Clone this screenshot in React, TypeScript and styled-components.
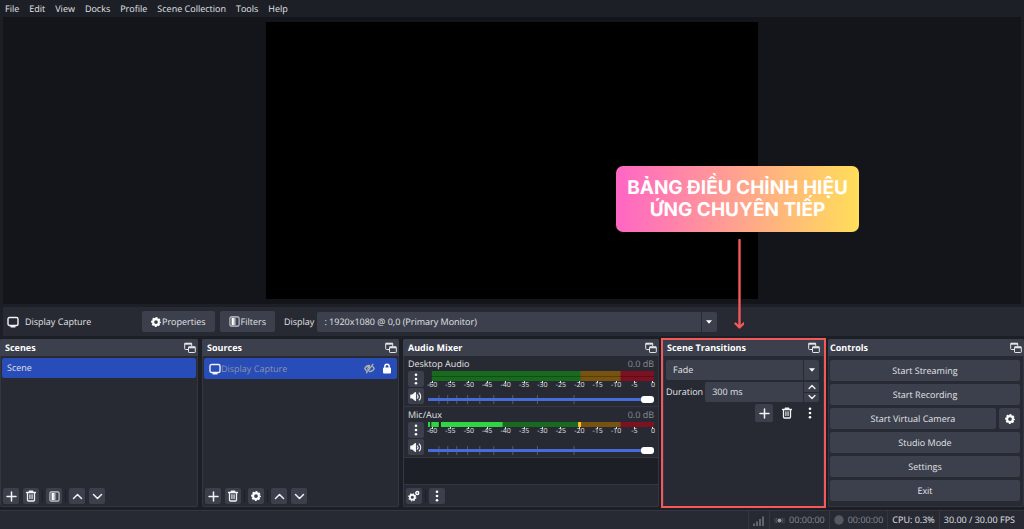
import React from "react";
import styled, { createGlobalStyle, css } from "styled-components";

const c = {
  window: "#1d1f26",
  panel: "#272a33",
  control: "#3c404d",
  stage: "#14151a",
  edge: "#343741",
  text: "#e2e3e7",
  dim: "#888b93",
  blue: "#284cb8",
  red: "#f5585b",
};

const GlobalStyle = createGlobalStyle`
  *, *::before, *::after { box-sizing: border-box; }
  body { margin: 0; background: ${c.window}; }
  body, button, input, select {
    font-family: "Open Sans", "Noto Sans", sans-serif;
    font-size: 9px;
    line-height: 12px;
    color: ${c.text};
    text-rendering: geometricPrecision;
  }
  button, input, select { margin: 0; padding: 0; border: 0; outline: 0; }
  svg { display: block; flex: none; }
`;

const Window = styled.div`
  display: flex;
  flex-direction: column;
  min-height: 100vh;
  overflow: hidden;
`;

const MenuBar = styled.nav`
  display: flex;
  gap: 10px;
  height: 17px;
  padding: 0 5px;
  align-items: center;
`;

const MenuItem = styled.button`
  background: none;
  white-space: nowrap;
`;

const Preview = styled.main`
  flex: 1 1 0;
  display: flex;
  justify-content: center;
  min-height: 200px;
  margin: 0 3px;
  padding: 5px;
  background: ${c.stage};
`;

const Canvas = styled.div`
  aspect-ratio: 16 / 9;
  background: #000;
`;

const ContextBar = styled.section`
  display: flex;
  align-items: center;
  gap: 5px;
  height: 29px;
  margin: 3px 0 3px 3px;
  padding-left: 4px;
  background: ${c.panel};
`;

const SourceName = styled.div`
  display: flex;
  align-items: center;
  gap: 6px;
  width: 130px;
`;

const Button = styled.button`
  display: flex;
  align-items: center;
  justify-content: center;
  height: 21px;
  border-radius: 2px;
  background: ${c.control};
  white-space: nowrap;
`;

const ContextButton = styled(Button)`
  padding: 0 9px;
  gap: 1px;
`;

const FieldLabel = styled.label`
  white-space: nowrap;
`;

const ContextField = styled.div`
  display: flex;
  flex: 1;
  align-items: center;
  gap: 3px;
  padding-left: 4px;
`;

const SelectBox = styled.div<{ $share?: number }>`
  display: grid;
  grid-template-columns: 1fr 16px;
  align-items: center;
  height: 20px;
  border-radius: 2px;
  background: ${c.control};
  ${(p) => p.$share && css`width: ${p.$share}%;`}
`;

const Select = styled.select`
  grid-area: 1 / 1 / 2 / 3;
  appearance: none;
  width: 100%;
  height: 20px;
  padding: 0 7px;
  background: transparent;
`;

const SelectArrow = styled.span`
  grid-area: 1 / 2;
  display: flex;
  align-items: center;
  justify-content: center;
  height: 20px;
  border-left: 1px solid ${c.panel};
  pointer-events: none;
`;

const Docks = styled.div`
  display: grid;
  grid-template-columns:
    minmax(0, 198fr) minmax(0, 197fr) minmax(0, 256fr)
    minmax(0, 161fr) minmax(0, 196fr);
  gap: 4px;
  min-height: 168px;
`;

const Dock = styled.section`
  position: relative;
  display: flex;
  flex-direction: column;
  border-radius: 2px;
  background: ${c.panel};
  box-shadow: inset 0 0 0 1px ${c.edge};
`;

const DockHeader = styled.header<{ $left: number; $right: number }>`
  display: flex;
  align-items: center;
  justify-content: space-between;
  height: 17px;
  padding: 0 ${(p) => p.$right}px 0 ${(p) => p.$left}px;
  border-radius: 2px 2px 0 0;
  background: ${c.control};
`;

const DockTitle = styled.h2`
  margin: 0;
  font-size: 9px;
  line-height: 12px;
  font-weight: 700;
  color: #fff;
`;

const IconButton = styled.button<{ $flat?: boolean; $size?: number }>`
  display: flex;
  align-items: center;
  justify-content: center;
  width: ${(p) => p.$size ?? 16}px;
  height: ${(p) => p.$size ?? 16}px;
  border-radius: 2px;
  background: ${(p) => (p.$flat ? "none" : c.control)};
`;

const DockList = styled.ul`
  flex: 1;
  margin: 0;
  padding: 2px;
  list-style: none;
`;

const ListItem = styled.li<{ $tall?: boolean }>`
  display: flex;
  align-items: center;
  height: ${(p) => (p.$tall ? 21 : 20)}px;
  padding: 0 5px;
  border-radius: 2px;
  background: ${c.blue};
`;

const HiddenSource = styled.span`
  flex: 1;
  color: #8c93a8;
`;

const RowIcons = styled.span`
  display: flex;
  align-items: center;
  gap: 7px;
`;

const Toolbar = styled.div`
  display: flex;
  align-items: center;
  gap: 4px;
  height: 22px;
  padding: 0 3px;
`;

const Divider = styled.span`
  width: 1px;
  height: 12px;
  margin: 0 -1px;
  background: ${c.window};
`;

const Channel = styled.div`
  display: grid;
  grid-template: 14px 1fr / 16px minmax(0, 1fr);
  column-gap: 4px;
  height: 51px;
  padding: 1px 5px 4px;
  border-bottom: 1px solid ${c.edge};
`;

const ChannelHead = styled.div`
  grid-column: 1 / 3;
  display: flex;
  justify-content: space-between;
  line-height: 14px;
`;

const Level = styled.span`
  color: ${c.dim};
`;

const ChannelButtons = styled.div`
  display: flex;
  flex-direction: column;
  gap: 1px;
`;

const ChannelBody = styled.div`
  display: flex;
  flex-direction: column;
  justify-content: space-between;
`;

const MeterScale = styled.div`
  display: flex;
  justify-content: space-between;
  margin: 0 1px 0 4px;
  font-size: 7px;
  line-height: 7px;
`;

const ScaleMark = styled.span`
  display: flex;
  flex-direction: column;
  align-items: center;
  width: 0;
  white-space: nowrap;
  &::before {
    content: "";
    flex: none;
    width: 1px;
    height: 2px;
    margin-bottom: -1px;
    background: ${c.text};
  }
`;

const Fader = styled.div`
  display: grid;
  align-items: center;
  height: 9px;
  > * { grid-area: 1 / 1; }
`;

const Slider = styled.input`
  appearance: none;
  width: 100%;
  height: 9px;
  background: linear-gradient(#476bd7, #476bd7) center / 100% 3px no-repeat;
  &::-webkit-slider-thumb {
    appearance: none;
    width: 13px;
    height: 7px;
    border-radius: 3px;
    background: #fff;
  }
`;

const MixerSpace = styled.div`
  flex: 1;
  margin: 0 1px;
  background: ${c.window};
  border-bottom: 1px solid ${c.edge};
`;

const TransitionBody = styled.div`
  display: flex;
  flex-direction: column;
  gap: 2px;
  padding: 4px 5px 0 3px;
`;

const DurationRow = styled.div`
  display: flex;
  align-items: center;
  gap: 2px;
`;

const SpinBox = styled.div`
  display: flex;
  flex: 1;
  min-width: 0;
  height: 20px;
  border-radius: 2px;
  background: ${c.control};
`;

const SpinInput = styled.input`
  flex: 1;
  min-width: 0;
  padding: 0 7px;
  background: none;
`;

const SpinButtons = styled.div`
  display: flex;
  flex-direction: column;
  width: 16px;
  border-left: 1px solid ${c.panel};
`;

const SpinButton = styled.button`
  display: flex;
  flex: 1;
  align-items: center;
  justify-content: center;
  background: none;
  & + & { border-top: 1px solid ${c.panel}; }
`;

const TransitionActions = styled.div`
  display: flex;
  justify-content: flex-end;
  gap: 5px;
`;

const ControlsBody = styled.div`
  display: grid;
  gap: 3px;
  padding: 4px 4px 0 2px;
`;

const ControlsRow = styled.div`
  display: grid;
  grid-template-columns: 1fr 21px;
  gap: 3px;
`;

const Highlight = styled.div`
  position: absolute;
  inset: -1px -2px;
  border: 2px solid ${c.red};
  pointer-events: none;
`;

const Annotation = styled.div`
  position: absolute;
  left: -47px;
  bottom: calc(100% + 9px);
  display: flex;
  flex-direction: column;
  align-items: center;
  gap: 7px;
  width: 243px;
`;

const Callout = styled.p`
  width: 100%;
  margin: 0;
  padding: 11px 0;
  border-radius: 7px;
  background: linear-gradient(90deg, #ff66c4, #ffde59);
  color: #fff;
  font-family: Inter, "Open Sans", sans-serif;
  font-size: 19px;
  line-height: 22px;
  font-weight: 700;
  text-align: center;
  white-space: nowrap;
`;

const StatusBar = styled.footer`
  display: flex;
  justify-content: flex-end;
  height: 19px;
  margin-top: 3px;
  border-top: 1px solid ${c.edge};
  background: ${c.panel};
`;

const StatusItem = styled.div<{ $dim?: boolean }>`
  display: flex;
  align-items: center;
  gap: 4px;
  padding: 0 4px;
  border-left: 1px solid ${c.edge};
  color: ${(p) => (p.$dim ? c.dim : c.text)};
  white-space: nowrap;
  &:last-child { padding-right: 9px; }
`;

const stroke = { fill: "none", stroke: "#f2f2f4", strokeLinecap: "round", strokeLinejoin: "round" } as const;

const MonitorIcon = () => (
  <svg width="12" height="12" viewBox="0 0 12 12" {...stroke} strokeWidth="1.4">
    <rect x="1" y="1.5" width="10" height="8" rx="1.5" />
    <path d="M4 10.7h4" />
  </svg>
);

const GearIcon = () => (
  <svg width="10" height="10" viewBox="0 0 12 12" fill="none" stroke="#fff">
    <circle cx="6" cy="6" r="3.5" strokeWidth="2.5" />
    <circle cx="6" cy="6" r="5" strokeWidth="1.8" strokeDasharray="2.4 1.527" strokeDashoffset="1.2" />
  </svg>
);

const FilterIcon = () => (
  <svg width="11" height="11" viewBox="0 0 12 12">
    <defs>
      <linearGradient id="fade">
        <stop offset="0.3" stopColor="#fff" />
        <stop offset="1" stopColor="#fff" stopOpacity="0.1" />
      </linearGradient>
    </defs>
    <rect x="1" y="1" width="10" height="10" rx="1.5" fill="none" stroke="#c9cbd0" strokeWidth="1.2" />
    <rect x="2.8" y="2" width="5.4" height="8" fill="url(#fade)" />
  </svg>
);

const FloatIcon = () => (
  <svg width="12" height="12" viewBox="0 0 12 12" fill="none" stroke="#e4e5e8">
    <path d="M4 7.5H1.5a.8.8 0 0 1-.8-.8V1.5h7v2.5" />
    <path d="M.7 1.7h7" strokeWidth="2" />
    <rect x="4.5" y="5" width="6.8" height="5.5" rx=".6" />
    <path d="M4.500 5.300h6.800" strokeWidth="2" />
  </svg>
);

const PlusIcon = () => (
  <svg width="11" height="11" viewBox="0 0 11 11" {...stroke} strokeWidth="1.5">
    <path d="M5.500 1v9M1 5.500h9" />
  </svg>
);

const TrashIcon = () => (
  <svg width="12" height="12" viewBox="0 0 12 12" {...stroke} strokeWidth="1.3">
    <path d="M1.500 2.500h9M4.300 2.300V1.200h3.400v1.100M2.500 2.800V10a1 1 0 0 0 1 1h5a1 1 0 0 0 1-1V2.800" />
    <path d="M4.700 4.700v4M6 4.700v4M7.300 4.700v4" strokeWidth=".8" />
  </svg>
);

const ChevronIcon = ({ down, size = 11 }: { down?: boolean; size?: number }) => (
  <svg width={size} height={size} viewBox="0 0 11 11" {...stroke} strokeWidth={size < 11 ? 1.9 : 1.5}>
    <path d={down ? "M1.500 3.500l4 4 4-4" : "M1.500 7.500l4-4 4 4"} />
  </svg>
);

const DotsIcon = () => (
  <svg width="4" height="12" viewBox="0 0 4 12" fill="#fff">
    <circle cx="2" cy="1.8" r="1.3" />
    <circle cx="2" cy="6" r="1.3" />
    <circle cx="2" cy="10.2" r="1.3" />
  </svg>
);

const CaretIcon = () => (
  <svg width="6" height="4" viewBox="0 0 6 4" fill="#fff">
    <path d="M0 .3h6L3 3.700z" />
  </svg>
);

const SpeakerIcon = () => (
  <svg width="12" height="11" viewBox="0 0 12 11" {...stroke} strokeWidth="1.1">
    <path d="M.8 4v3h1.700L5.500 9.500v-8L2.500 4z" fill="#fff" />
    <path d="M7.300 3.800c.9 1 .9 2.400 0 3.400M9.200 2c2 2 2 5 0 7" />
  </svg>
);

const CogsIcon = () => (
  <svg width="12" height="12" viewBox="0 0 12 12" fill="none" stroke="#fff">
    <circle cx="4.3" cy="7.3" r="2.4" strokeWidth="1.7" />
    <circle cx="4.3" cy="7.3" r="3.5" strokeWidth="1.2" strokeDasharray="1.450 1.300" />
    <circle cx="9.3" cy="3" r="1.5" strokeWidth="1.4" />
  </svg>
);

const HiddenIcon = () => (
  <svg width="11" height="11" viewBox="0 0 11 11" fill="none" stroke="#b4b4ac" strokeWidth="1.3" strokeLinecap="round">
    <path d="M5.500 2.500C3 2.400 1.500 4 .8 5.500c.4 1 1 1.700 1.800 2.200M5.500 8.500C8 8.600 9.500 7 10.200 5.500c-.4-.9-.9-1.500-1.600-2M2.500 9.800l6.500-8.600M4 6.500c-.6-1.300.2-2.500 1.500-2.500" />
  </svg>
);

const LockIcon = () => (
  <svg width="10" height="11" viewBox="0 0 10 11">
    <path d="M2.800 5V3.400a2.200 2.200 0 0 1 4.400 0V5" fill="none" stroke="#fff" strokeWidth="1.4" />
    <rect x="1" y="4.6" width="8" height="5.8" rx="1" fill="#fff" />
  </svg>
);

const SignalIcon = () => (
  <svg width="12" height="11" viewBox="0 0 12 11" fill="#60636c">
    <path d="M0 8.500h2V11H0zM3 6.500h2V11H3zM6 4h2v7H6zM9 1.500h2V11H9z" />
  </svg>
);

const StreamIcon = () => (
  <svg width="11" height="11" viewBox="0 0 11 11" fill="none" stroke="#5c5f68">
    <circle cx="5.5" cy="5.5" r="2" fill="#9a9ca2" stroke="none" />
    <path d="M3 3c-1.300 1.500-1.300 3.500 0 5M8 3c1.300 1.500 1.300 3.500 0 5" />
    <path d="M1.200 2.500c-1 2-1 4 0 6M9.800 2.500c1 2 1 4 0 6" strokeOpacity=".4" />
  </svg>
);

const RecordIcon = () => (
  <svg width="10" height="10" viewBox="0 0 10 10">
    <circle cx="5" cy="5" r="4.7" fill="#555861" />
  </svg>
);

const ArrowDrawing = () => (
  <svg width="12" height="91" viewBox="0 0 12 91" fill="none" stroke={c.red} strokeWidth="2.4" strokeLinecap="round" strokeLinejoin="round">
    <path d="M7.500 1v87M3.500 84.500l4 4 4-4" />
  </svg>
);

const Meter = ({ active }: { active?: boolean }) => (
  <svg width="100%" height={active ? 5 : 10}>
    <rect x={active ? "0%" : "1.7%"} width="68%" height="10" fill="#176a1e" />
    <rect x="67.4%" width="18%" height="10" fill="#77530f" />
    <rect x="85.2%" width="14.8%" height="10" fill="#7d1122" />
    {active ? (
      <>
        <rect width="33%" height="5" fill="#30d544" />
        <rect x="1%" width="1" height="5" fill="#111" />
        <rect x="4.8%" width="2" height="5" fill="#111" />
        <rect x="66.4%" width="3" height="5" fill="#ffbf1f" />
      </>
    ) : (
      <rect x="1.7%" y="5" width="98.3%" height="1" fill="#000" fillOpacity=".25" />
    )}
  </svg>
);

const scale = [-60, -55, -50, -45, -40, -35, -30, -25, -20, -15, -10, -5, 0];
const faderTicks = [4.6, 8.5, 12.5, 17.3, 22.7, 28.9, 37.3, 48.2, 64.4];

const MixerChannel = ({ name, active }: { name: string; active?: boolean }) => (
  <Channel>
    <ChannelHead>
      <label htmlFor={name}>{name}</label>
      <Level>0.0 dB</Level>
    </ChannelHead>
    <ChannelButtons>
      <IconButton aria-label={`${name} options`}><DotsIcon /></IconButton>
      <IconButton aria-label={`Mute ${name}`}><SpeakerIcon /></IconButton>
    </ChannelButtons>
    <ChannelBody>
      <div>
        <Meter active={active} />
        <MeterScale>
          {scale.map((v) => <ScaleMark key={v}>{v}</ScaleMark>)}
        </MeterScale>
      </div>
      <Fader>
        <svg width="100%" height="9">
          {faderTicks.map((x) => <rect key={x} x={`${x}%`} width="1" height="9" fill="#555a68" />)}
        </svg>
        <Slider id={name} type="range" min="0" max="100" defaultValue="100" />
      </Fader>
    </ChannelBody>
  </Channel>
);

const Header = ({ title, left = 5, right = 2 }: { title: string; left?: number; right?: number }) => (
  <DockHeader $left={left} $right={right}>
    <DockTitle>{title}</DockTitle>
    <IconButton $flat $size={12} aria-label={`Float ${title}`}><FloatIcon /></IconButton>
  </DockHeader>
);

const ListToolbar = ({ label, icon }: { label: string; icon: React.ReactNode }) => (
  <Toolbar>
    <IconButton aria-label="Add"><PlusIcon /></IconButton>
    <IconButton aria-label="Remove"><TrashIcon /></IconButton>
    <Divider />
    <IconButton aria-label={label}>{icon}</IconButton>
    <Divider />
    <IconButton aria-label="Move up"><ChevronIcon /></IconButton>
    <IconButton aria-label="Move down"><ChevronIcon down /></IconButton>
  </Toolbar>
);

const menus = ["File", "Edit", "View", "Docks", "Profile", "Scene Collection", "Tools", "Help"];

export default function App() {
  return (
    <Window>
      <GlobalStyle />
      <MenuBar>
        {menus.map((m) => <MenuItem key={m}>{m}</MenuItem>)}
      </MenuBar>
      <Preview><Canvas /></Preview>

      <ContextBar>
        <SourceName><MonitorIcon />Display Capture</SourceName>
        <ContextButton><GearIcon />Properties</ContextButton>
        <ContextButton><FilterIcon />Filters</ContextButton>
        <ContextField>
          <FieldLabel htmlFor="display">Display</FieldLabel>
          <SelectBox $share={54}>
            <Select id="display"><option>: 1920x1080 @ 0,0 (Primary Monitor)</option></Select>
            <SelectArrow><CaretIcon /></SelectArrow>
          </SelectBox>
        </ContextField>
      </ContextBar>

      <Docks>
        <Dock>
          <Header title="Scenes" />
          <DockList><ListItem>Scene</ListItem></DockList>
          <ListToolbar label="Scene filters" icon={<FilterIcon />} />
        </Dock>

        <Dock>
          <Header title="Sources" />
          <DockList>
            <ListItem $tall>
              <MonitorIcon />
              <HiddenSource>Display Capture</HiddenSource>
              <RowIcons><HiddenIcon /><LockIcon /></RowIcons>
            </ListItem>
          </DockList>
          <ListToolbar label="Source properties" icon={<GearIcon />} />
        </Dock>

        <Dock>
          <Header title="Audio Mixer" />
          <MixerChannel name="Desktop Audio" />
          <MixerChannel name="Mic/Aux" active />
          <MixerSpace />
          <Toolbar>
            <IconButton aria-label="Advanced audio properties"><CogsIcon /></IconButton>
            <Divider />
            <IconButton aria-label="Mixer options"><DotsIcon /></IconButton>
          </Toolbar>
        </Dock>

        <Dock>
          <Header title="Scene Transitions" left={4} right={4} />
          <TransitionBody>
            <SelectBox>
              <Select aria-label="Transition"><option>Fade</option></Select>
              <SelectArrow><CaretIcon /></SelectArrow>
            </SelectBox>
            <DurationRow>
              <FieldLabel htmlFor="duration">Duration</FieldLabel>
              <SpinBox>
                <SpinInput id="duration" defaultValue="300 ms" />
                <SpinButtons>
                  <SpinButton aria-label="Increase"><ChevronIcon size={8} /></SpinButton>
                  <SpinButton aria-label="Decrease"><ChevronIcon down size={8} /></SpinButton>
                </SpinButtons>
              </SpinBox>
            </DurationRow>
            <TransitionActions>
              <IconButton $size={18} aria-label="Add transition"><PlusIcon /></IconButton>
              <IconButton $size={18} $flat aria-label="Remove transition"><TrashIcon /></IconButton>
              <IconButton $size={18} $flat aria-label="Transition options"><DotsIcon /></IconButton>
            </TransitionActions>
          </TransitionBody>
          <Highlight />
          <Annotation>
            <Callout>BẢNG ĐIỀU CHỈNH HIỆU<br />ỨNG CHUYÊN TIẾP</Callout>
            <ArrowDrawing />
          </Annotation>
        </Dock>

        <Dock>
          <Header title="Controls" left={2} />
          <ControlsBody>
            <Button>Start Streaming</Button>
            <Button>Start Recording</Button>
            <ControlsRow>
              <Button>Start Virtual Camera</Button>
              <IconButton $size={21} aria-label="Virtual camera settings"><GearIcon /></IconButton>
            </ControlsRow>
            <Button>Studio Mode</Button>
            <Button>Settings</Button>
            <Button>Exit</Button>
          </ControlsBody>
        </Dock>
      </Docks>

      <StatusBar>
        <StatusItem><SignalIcon /></StatusItem>
        <StatusItem $dim><StreamIcon />00:00:00</StatusItem>
        <StatusItem $dim><RecordIcon />00:00:00</StatusItem>
        <StatusItem>CPU: 0.3%</StatusItem>
        <StatusItem>30.00 / 30.00 FPS</StatusItem>
      </StatusBar>
    </Window>
  );
}
